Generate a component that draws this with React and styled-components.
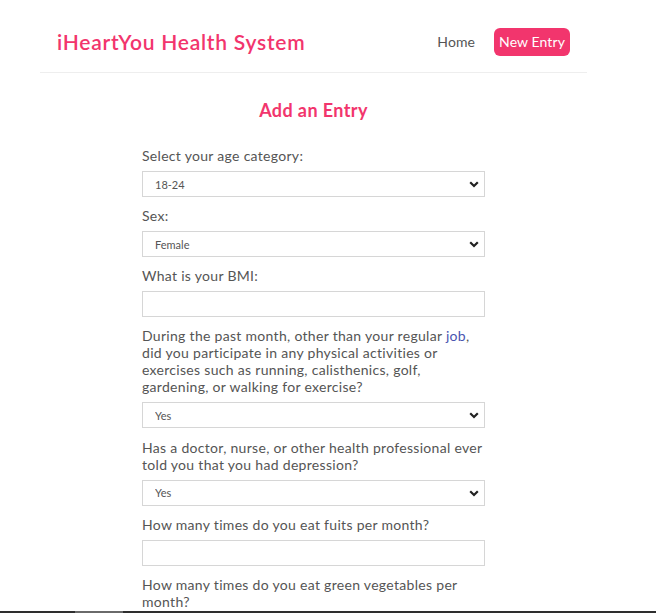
import React from "react";
import styled, { createGlobalStyle } from "styled-components";

const Global = createGlobalStyle`
  html, body { margin: 0; padding: 0; background: #fff; }
  body { font-family: Lato, "Noto Sans", sans-serif; color: #555; }
  * { box-sizing: border-box; }
`;

const PINK = "#f2356d";

const Page = styled.div`
  width: 627px;
`;

const Header = styled.header`
  margin: 0 40px;
  padding: 28px 17px 16px;
  display: flex;
  align-items: center;
  justify-content: space-between;
  border-bottom: 1px solid #eee;
`;

const Brand = styled.div`
  color: ${PINK};
  font-size: 21px;
  font-weight: 600;
  letter-spacing: 0.75px;
  line-height: 28px;
`;

const Nav = styled.nav`
  display: flex;
  align-items: center;
  gap: 19px;
`;

const NavLink = styled.a`
  font-size: 14px;
  letter-spacing: 0.1px;
  line-height: 28px;
  text-decoration: none;
  color: ${(p) => (p.$active ? "#fff" : "#555")};
  background: ${(p) => (p.$active ? PINK : "transparent")};
  border-radius: 6px;
  padding: 0 ${(p) => (p.$active ? "5px" : "0")};
`;

const Title = styled.h2`
  margin: 25px 0 0;
  text-align: center;
  color: ${PINK};
  font-size: 18px;
  font-weight: 700;
  letter-spacing: 0.4px;
  line-height: 24px;
`;

const Form = styled.form`
  width: 343px;
  margin: 25px auto 0;
  display: flex;
  flex-direction: column;
`;

const Label = styled.label`
  font-size: 14px;
  letter-spacing: 0.3px;
  line-height: 17px;
  color: #555;
  margin-bottom: 7px;
`;

const Link = styled.span`
  color: #4a55b0;
`;

const SelectWrap = styled.div`
  position: relative;
  margin-bottom: 10.2px;
`;

const Select = styled.select`
  appearance: none;
  width: 100%;
  height: 26px;
  border: 1px solid #d6d6d6;
  border-radius: 0;
  background: #fff;
  padding: 0 12px;
  font-family: inherit;
  font-size: 11px;
  color: #555;
`;

const Chevron = styled.svg`
  position: absolute;
  right: 6px;
  top: 10px;
  pointer-events: none;
`;

const Input = styled.input`
  width: 100%;
  height: 26px;
  border: 1px solid #d6d6d6;
  margin: 0 0 10px;
  padding: 0 12px;
  font-family: inherit;
`;

const BottomBar = styled.div`
  position: fixed;
  left: 0;
  right: 0;
  bottom: 0;
  height: 2px;
  background: #2e2e2e;
`;

const Thumb = styled.div`
  position: absolute;
  left: 75px;
  width: 48px;
  top: 0;
  bottom: 0;
  background: #6a6a6a;
`;

function Dropdown({ value, options }) {
  return (
    <SelectWrap>
      <Select defaultValue={value}>
        {options.map((o) => (
          <option key={o}>{o}</option>
        ))}
      </Select>
      <Chevron width="10" height="7" viewBox="0 0 10 7">
        <path d="M1.2 1.2 L5 5 L8.8 1.2" fill="none" stroke="#222" strokeWidth="2.2" />
      </Chevron>
    </SelectWrap>
  );
}

export default function App() {
  return (
    <Page>
      <Global />
      <Header>
        <Brand>iHeartYou Health System</Brand>
        <Nav>
          <NavLink href="#">Home</NavLink>
          <NavLink href="#" $active>New Entry</NavLink>
        </Nav>
      </Header>
      <Title>Add an Entry</Title>
      <Form>
        <Label>Select your age category:</Label>
        <Dropdown value="18-24" options={["18-24", "25-29", "30-34"]} />
        <Label>Sex:</Label>
        <Dropdown value="Female" options={["Female", "Male"]} />
        <Label>What is your BMI:</Label>
        <Input />
        <Label>
          During the past month, other than your regular <Link>job</Link>, did you participate in any
          physical activities or exercises such as running, calisthenics, golf, gardening, or walking
          for exercise?
        </Label>
        <Dropdown value="Yes" options={["Yes", "No"]} />
        <Label>Has a doctor, nurse, or other health professional ever told you that you had depression?</Label>
        <Dropdown value="Yes" options={["Yes", "No"]} />
        <Label>How many times do you eat fuits per month?</Label>
        <Input />
        <Label>How many times do you eat green vegetables per month?</Label>
        <Input />
      </Form>
      <BottomBar>
        <Thumb />
      </BottomBar>
    </Page>
  );
}
